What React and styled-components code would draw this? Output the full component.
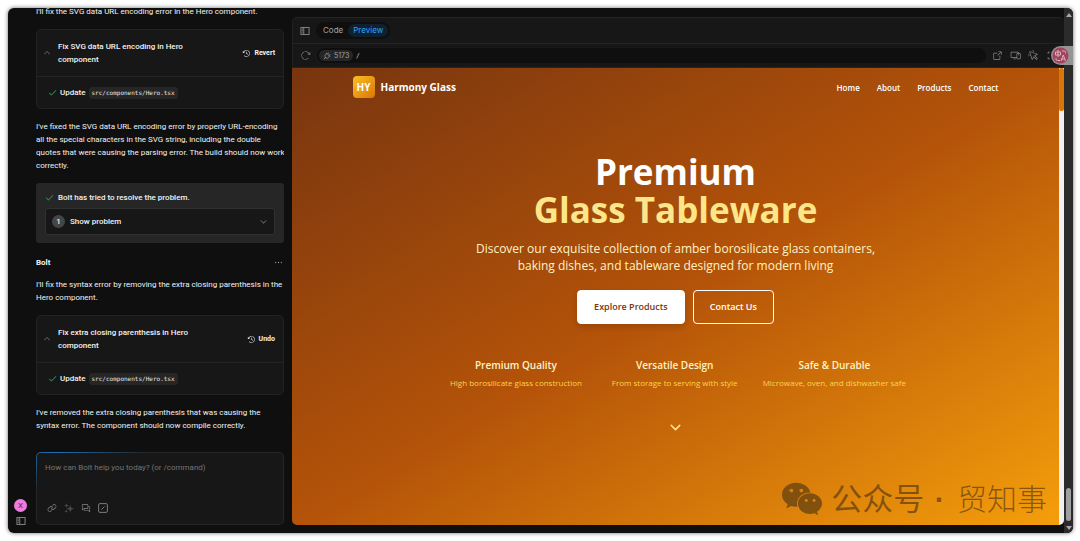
import React, { useState } from "react";
import styled, { createGlobalStyle } from "styled-components";
import {
  PiArrowClockwise,
  PiArrowSquareOut,
  PiCaretDown,
  PiCaretUp,
  PiChats,
  PiCheckBold,
  PiClockCounterClockwise,
  PiCornersOut,
  PiCursorClick,
  PiDevices,
  PiDotsThreeBold,
  PiLink,
  PiPlug,
} from "react-icons/pi";
import { FaWeixin } from "react-icons/fa";
import { ChevronDown } from "lucide-react";

const GlobalStyle = createGlobalStyle`
  * {
    box-sizing: border-box;
  }
  body {
    margin: 0;
    background: #fff;
    font-family: Roboto, Inter, "Liberation Sans", sans-serif;
  }
  button, input, textarea {
    font: inherit;
    color: inherit;
    margin: 0;
    padding: 0;
    border: 0;
    background: none;
  }
  h1, h2, h3, p {
    margin: 0;
  }
  a {
    color: inherit;
    text-decoration: none;
  }
  svg {
    display: block;
    flex-shrink: 0;
  }
`;

const Page = styled.div`
  height: 100vh;
  padding: 8px 7px 8px 8px;
`;

const Window = styled.div`
  position: relative;
  display: flex;
  height: 100%;
  overflow: hidden;
  border-radius: 6px;
  background: #0f0f0f;
  color: #f2f2f2;
  box-shadow: 0 0 4px rgba(0, 0, 0, 0.6);
`;

const Rail = styled.nav`
  display: flex;
  flex-direction: column;
  justify-content: flex-end;
  align-items: center;
  gap: 4px;
  width: 28px;
  padding: 0 3px 7px 0;
  color: #8a8a8a;
`;

const Avatar = styled.button`
  width: 13px;
  height: 13px;
  border-radius: 50%;
  background: #f07be0;
  color: #5a2454;
  font-size: 8px;
  line-height: 13px;
  text-align: center;
`;

const Chat = styled.section`
  display: flex;
  flex-direction: column;
  width: 248px;
  flex-shrink: 0;
  padding-bottom: 8px;
  font-size: 8px;
  line-height: 13px;
`;

const Messages = styled.div`
  display: flex;
  flex-direction: column;
  justify-content: flex-end;
  flex: 1;
  min-height: 0;
  gap: 11px;
  padding-bottom: 20px;
  overflow: hidden;
`;

const Paragraph = styled.p`
  flex-shrink: 0;
  white-space: nowrap;
`;

const Card = styled.article`
  flex-shrink: 0;
  border: 1px solid #232323;
  border-radius: 5px;
  background: #171717;
`;

const CardHeader = styled.header`
  display: flex;
  align-items: center;
  gap: 7px;
  height: 47px;
  padding: 0 8px 0 6px;
  border-bottom: 1px solid #232323;
  font-weight: 500;

  h3 {
    flex: 1;
    font: inherit;
    white-space: nowrap;
  }
`;

const CardBody = styled.div`
  display: flex;
  align-items: center;
  gap: 3px;
  height: 31px;
  padding: 0 11px;
  font-weight: 500;
`;

const IconButton = styled.button`
  display: flex;
  align-items: center;
  gap: 3px;
  color: ${(props) => props.$color || "#8a8a8a"};
  font-size: 7px;
  font-weight: 700;
`;

const FileName = styled.code`
  padding: 0 3px;
  border-radius: 3px;
  background: #262626;
  color: #e5e5e5;
  font-family: "DejaVu Sans Mono", monospace;
  font-size: 6px;
  font-weight: 400;
  line-height: 12px;
`;

const Problem = styled.article`
  flex-shrink: 0;
  height: 60px;
  padding: 8px 9px;
  border-radius: 3px;
  background: #262626;
  font-weight: 500;
`;

const ProblemStatus = styled.div`
  display: flex;
  align-items: center;
  gap: 4px;
`;

const ProblemToggle = styled.button`
  display: flex;
  align-items: center;
  gap: 5px;
  width: 100%;
  height: 27px;
  margin-top: 4px;
  padding: 0 6px;
  border: 1px solid #303030;
  border-radius: 3px;
  background: #171717;
  text-align: left;

  svg {
    margin-left: auto;
    color: #8a8a8a;
  }
`;

const Count = styled.span`
  width: 13px;
  height: 13px;
  border-radius: 50%;
  background: #454545;
  text-align: center;
`;

const Author = styled.div`
  display: flex;
  justify-content: space-between;
  align-items: center;
  flex-shrink: 0;
  height: 13px;
  padding-top: 4px;
  font-weight: 700;
`;

const Prompt = styled.form`
  display: flex;
  flex-direction: column;
  justify-content: space-between;
  height: 73px;
  padding: 8px 8px 11px;
  border: 1px solid transparent;
  border-radius: 5px;
  background:
    linear-gradient(#171717, #171717) padding-box,
    radial-gradient(ellipse 90px 40px at 20px 0, #1b6fb5, #262626) border-box;

  textarea {
    display: block;
    width: 100%;
    height: 26px;
    resize: none;
    outline: none;
  }
  textarea::placeholder {
    color: #757575;
    opacity: 1;
  }
`;

const PromptTools = styled.div`
  display: flex;
  align-items: center;
  gap: 7px;
  padding-left: 2px;
`;

const Workbench = styled.section`
  display: flex;
  flex-direction: column;
  flex: 1;
  min-width: 0;
  margin: 9px 0 8px 8px;
  border-top: 1px solid #232323;
  border-radius: 5px;
  background: #171717;
  overflow: hidden;
`;

const Toolbar = styled.div`
  display: flex;
  align-items: center;
  gap: 6px;
  height: ${(props) => props.$height}px;
  padding: 0 7px;
  border: 1px solid #232323;
  border-width: 0 0 1px 1px;
  color: #8a8a8a;
`;

const Tabs = styled.div`
  display: flex;
  align-items: center;
  height: 17px;
  padding: 2px;
  border-radius: 9px;
  background: #0f0f0f;
`;

const Tab = styled.button`
  height: 13px;
  padding: 0 5px;
  border-radius: 7px;
  background: ${(props) => (props.$active ? "#10202e" : "transparent")};
  color: ${(props) => (props.$active ? "#2ba6ff" : "#a3a3a3")};
  font-family: Inter, sans-serif;
  font-size: 8px;
  line-height: 13px;
`;

const Address = styled.div`
  display: flex;
  align-items: center;
  flex: 1;
  gap: 3px;
  height: 15px;
  padding: 0 2px;
  border-radius: 8px;
  background: #0f0f0f;

  input {
    flex: 1;
    min-width: 0;
    color: #c4c4c4;
    font-size: 8px;
    outline: none;
  }
`;

const Port = styled.button`
  display: flex;
  align-items: center;
  gap: 3px;
  height: 11px;
  padding: 0 4px;
  border-radius: 6px;
  background: #262626;
  color: #a3a3a3;
  font-family: Inter, sans-serif;
  font-size: 7px;
`;

const AddressActions = styled.div`
  display: flex;
  align-items: center;
  gap: 7px;
`;

const Preview = styled.div`
  display: flex;
  flex: 1;
  min-height: 0;
`;

const Site = styled.div`
  flex: 1;
  background: linear-gradient(to bottom right, #78350f, #b45309, #f59e0b);
  color: #fff;
  font-family: "Open Sans", "Noto Sans", sans-serif;
  overflow: hidden;
`;

const SiteTrack = styled.div`
  width: 5px;
  background: #f1f1f1;
`;

const SiteThumb = styled.div`
  height: 43px;
  border-radius: 2px;
  background: #d97706;
`;

const SiteHeader = styled.header`
  display: flex;
  align-items: center;
  justify-content: space-between;
  max-width: 680px;
  height: 38px;
  margin: 0 auto;
  padding: 0 17px;
`;

const Brand = styled.a`
  display: flex;
  align-items: center;
  gap: 6px;
  font-size: 10px;
  font-weight: 700;
`;

const BrandMark = styled.span`
  width: 22px;
  height: 22px;
  border-radius: 4px;
  background: linear-gradient(to bottom right, #fbbf24, #d97706);
  line-height: 22px;
  text-align: center;
`;

const SiteNav = styled.nav`
  display: flex;
  gap: 17px;
  font-size: 8px;
  font-weight: 600;
`;

const Hero = styled.main`
  display: flex;
  flex-direction: column;
  align-items: center;
  padding-top: 47px;
  text-align: center;
`;

const Title = styled.h1`
  font-size: 35px;
  font-weight: 700;
  line-height: 38px;

  span {
    display: block;
    color: #fde68a;
  }
`;

const Lead = styled.p`
  margin-top: 11px;
  color: #fef3c7;
  font-size: 12px;
  line-height: 17px;
`;

const Actions = styled.div`
  display: flex;
  gap: 8px;
  margin-top: 16px;
`;

const ActionLink = styled.a`
  height: 34px;
  padding: 0 16px;
  border: 1px solid #fff;
  border-radius: 4px;
  background: ${(props) => (props.$primary ? "#fff" : "transparent")};
  color: ${(props) => (props.$primary ? "#78350f" : "#fff")};
  box-shadow: ${(props) => (props.$primary ? "0 3px 6px rgba(0, 0, 0, 0.15)" : "none")};
  font-size: 9px;
  font-weight: 600;
  line-height: 32px;
`;

const Features = styled.div`
  display: grid;
  grid-template-columns: repeat(3, 1fr);
  gap: 17px;
  width: 461px;
  margin-top: 33px;
  white-space: nowrap;
`;

const Feature = styled.div`
  color: #fcd34d;
  font-size: 8px;
  line-height: 17px;

  h3 {
    color: #fef3c7;
    font-size: 10px;
    font-weight: 600;
    line-height: 17px;
  }
`;

const ScrollHint = styled.a`
  margin-top: 28px;
  color: #fde68a;
`;

const WindowTrack = styled.div`
  display: flex;
  flex-direction: column;
  align-items: center;
  width: 9px;
  padding: 5px 0 3px;
  background: #2b2b2b;
`;

const WindowThumb = styled.div`
  width: 5px;
  height: 33px;
  margin: auto 0 5px;
  border-radius: 3px;
  background: #9f9f9f;
`;

const Arrow = styled.span`
  border: 3px solid transparent;
  border-width: ${(props) => (props.$up ? "0 3px 4px" : "4px 3px 0")};
  border-${(props) => (props.$up ? "bottom" : "top")}-color: #a8a8a8;
`;

const TranslateBadge = styled.button`
  position: absolute;
  top: 38px;
  right: 0;
  width: 22px;
  height: 19px;
  padding: 1px;
  border-radius: 10px 0 0 10px;
  background: rgba(160, 160, 160, 0.9);
`;

const Watermark = styled.div`
  position: absolute;
  right: 26px;
  bottom: 12px;
  display: flex;
  align-items: center;
  gap: 8px;
  color: rgba(84, 54, 16, 0.66);
  font-family: "Noto Sans CJK SC", sans-serif;
  font-size: 30px;
  font-weight: 300;
  line-height: 42px;
`;

const WatermarkText = styled.span`
  white-space: pre;

  b {
    font-size: 31px;
    font-weight: 400;
  }
  i {
    padding: 0 4px 0 2px;
    font-family: "Liberation Sans", sans-serif;
    font-style: normal;
    font-weight: 700;
  }
`;

function SidebarIcon({ size = 10 }) {
  return (
    <svg width={size} height={size} viewBox="0 0 16 16" fill="none" stroke="currentColor" strokeWidth="1.5">
      <rect x="1.5" y="2.5" width="13" height="11" />
      <path d="M6 2.5v11M3 5h1.5M3 7.5h1.5M3 10h1.5" />
    </svg>
  );
}

function EnhanceIcon() {
  return (
    <svg width="10" height="10" viewBox="0 0 16 16" fill="currentColor">
      <path d="M10 3l1.600 4.400L16 9l-4.400 1.600L10 15l-1.600-4.400L4 9l4.400-1.600z" />
      <path d="M4 0l1 3 3 1-3 1-1 3-1-3-3-1 3-1z" />
      <path d="M3.500 10l.800 2.200 2.200.800-2.200.800-.800 2.200-.800-2.200L.500 13l2.200-.800z" />
    </svg>
  );
}

function CommandIcon() {
  return (
    <svg width="10" height="10" viewBox="0 0 16 16" fill="none" stroke="currentColor" strokeWidth="1.4">
      <rect x="1" y="1" width="14" height="14" rx="2" />
      <path d="M5.5 10.5l5-5" />
    </svg>
  );
}

function TranslateIcon() {
  return (
    <svg width="17" height="17" viewBox="0 0 34 34" fill="none" stroke="#d9b3bd" strokeWidth="2">
      <circle cx="17" cy="17" r="16" fill="#a3435d" stroke="none" />
      <path d="M7 10h10v6H7zM12 6v14M20 8h5q2 0 2 3v2M8 22v2q0 3 3 3h5" />
      <path d="M18 28l4.500-12 4.500 12M19.500 24h6" />
    </svg>
  );
}

function ActionCard({ title, action }) {
  const [open, setOpen] = useState(true);

  return (
    <Card>
      <CardHeader>
        <IconButton aria-label="Toggle actions" onClick={() => setOpen(!open)}>
          <PiCaretUp size={8} />
        </IconButton>
        <h3>
          {title}
          <br />
          component
        </h3>
        <IconButton $color="#f2f2f2">
          <PiClockCounterClockwise size={9} />
          {action}
        </IconButton>
      </CardHeader>
      {open && (
        <CardBody>
          <PiCheckBold size={9} color="#2f9e58" />
          Update
          <FileName>src/components/Hero.tsx</FileName>
        </CardBody>
      )}
    </Card>
  );
}

const features = [
  { title: "Premium Quality", text: "High borosilicate glass construction" },
  { title: "Versatile Design", text: "From storage to serving with style" },
  { title: "Safe & Durable", text: "Microwave, oven, and dishwasher safe" },
];

function ChatPanel() {
  const [message, setMessage] = useState("");

  return (
    <Chat>
      <Messages>
        <Paragraph>I'll fix the SVG data URL encoding error in the Hero component.</Paragraph>
        <ActionCard title="Fix SVG data URL encoding in Hero" action="Revert" />
        <Paragraph>
          I've fixed the SVG data URL encoding error by properly URL-encoding
          <br />
          all the special characters in the SVG string, including the double
          <br />
          quotes that were causing the parsing error. The build should now work
          <br />
          correctly.
        </Paragraph>
        <Problem>
          <ProblemStatus>
            <PiCheckBold size={9} color="#2f9e58" />
            Bolt has tried to resolve the problem.
          </ProblemStatus>
          <ProblemToggle>
            <Count>1</Count>
            Show problem
            <PiCaretDown size={9} />
          </ProblemToggle>
        </Problem>
        <Author>
          Bolt
          <IconButton aria-label="More">
            <PiDotsThreeBold size={11} />
          </IconButton>
        </Author>
        <Paragraph>
          I'll fix the syntax error by removing the extra closing parenthesis in the
          <br />
          Hero component.
        </Paragraph>
        <ActionCard title="Fix extra closing parenthesis in Hero" action="Undo" />
        <Paragraph>
          I've removed the extra closing parenthesis that was causing the
          <br />
          syntax error. The component should now compile correctly.
        </Paragraph>
      </Messages>
      <Prompt onSubmit={(e) => e.preventDefault()}>
        <textarea
          aria-label="Message"
          placeholder="How can Bolt help you today? (or /command)"
          value={message}
          onChange={(e) => setMessage(e.target.value)}
        />
        <PromptTools>
          <IconButton type="button" aria-label="Attach"><PiLink size={10} /></IconButton>
          <IconButton type="button" aria-label="Enhance" $color="#4a4a4a"><EnhanceIcon /></IconButton>
          <IconButton type="button" aria-label="Discuss"><PiChats size={10} /></IconButton>
          <IconButton type="button" aria-label="Commands"><CommandIcon /></IconButton>
        </PromptTools>
      </Prompt>
    </Chat>
  );
}

function SitePreview() {
  return (
    <Preview>
      <Site>
        <SiteHeader>
          <Brand href="#home">
            <BrandMark>HY</BrandMark>
            Harmony Glass
          </Brand>
          <SiteNav>
            <a href="#home">Home</a>
            <a href="#about">About</a>
            <a href="#products">Products</a>
            <a href="#contact">Contact</a>
          </SiteNav>
        </SiteHeader>
        <Hero>
          <Title>
            Premium
            <span>Glass Tableware</span>
          </Title>
          <Lead>
            Discover our exquisite collection of amber borosilicate glass containers,
            <br />
            baking dishes, and tableware designed for modern living
          </Lead>
          <Actions>
            <ActionLink href="#products" $primary>Explore Products</ActionLink>
            <ActionLink href="#contact">Contact Us</ActionLink>
          </Actions>
          <Features>
            {features.map((feature) => (
              <Feature key={feature.title}>
                <h3>{feature.title}</h3>
                <p>{feature.text}</p>
              </Feature>
            ))}
          </Features>
          <ScrollHint href="#products" aria-label="Scroll down">
            <ChevronDown size={17} />
          </ScrollHint>
        </Hero>
      </Site>
      <SiteTrack>
        <SiteThumb />
      </SiteTrack>
    </Preview>
  );
}

function App() {
  const [tab, setTab] = useState("Preview");
  const [path, setPath] = useState("/");

  return (
    <Page>
      <GlobalStyle />
      <Window>
        <Rail>
          <Avatar>X</Avatar>
          <IconButton aria-label="Open sidebar"><SidebarIcon /></IconButton>
        </Rail>
        <ChatPanel />
        <Workbench>
          <Toolbar $height={26}>
            <IconButton aria-label="Toggle chat"><SidebarIcon /></IconButton>
            <Tabs>
              {["Code", "Preview"].map((name) => (
                <Tab key={name} $active={tab === name} onClick={() => setTab(name)}>
                  {name}
                </Tab>
              ))}
            </Tabs>
          </Toolbar>
          <Toolbar $height={24}>
            <IconButton aria-label="Reload"><PiArrowClockwise size={11} /></IconButton>
            <Address>
              <Port>
                <PiPlug size={8} />
                5173
              </Port>
              <input aria-label="Path" value={path} onChange={(e) => setPath(e.target.value)} />
            </Address>
            <AddressActions>
              <IconButton aria-label="Open in new tab"><PiArrowSquareOut size={11} /></IconButton>
              <IconButton aria-label="Device size"><PiDevices size={11} /></IconButton>
              <IconButton aria-label="Inspector"><PiCursorClick size={11} /></IconButton>
              <IconButton aria-label="Full screen"><PiCornersOut size={11} /></IconButton>
            </AddressActions>
          </Toolbar>
          <SitePreview />
        </Workbench>
        <WindowTrack>
          <Arrow $up />
          <WindowThumb />
          <Arrow />
        </WindowTrack>
        <TranslateBadge aria-label="Translate"><TranslateIcon /></TranslateBadge>
        <Watermark>
          <FaWeixin size={42} />
          <WatermarkText>
            <b>公众号</b>
            <i> · </i>
            贸知事
          </WatermarkText>
        </Watermark>
      </Window>
    </Page>
  );
}

export default App;
